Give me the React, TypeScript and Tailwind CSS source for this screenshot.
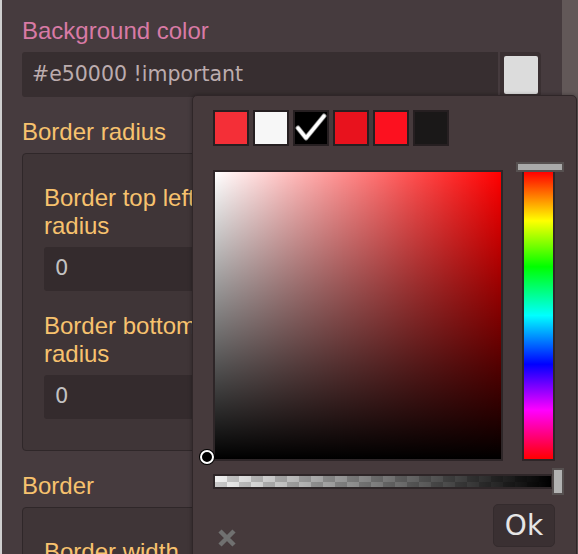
import React from "react";

const swatches = [
  { color: "bg-[#f42f37]", checked: false },
  { color: "bg-[#f7f7f7]", checked: false },
  { color: "bg-[#000000]", checked: true },
  { color: "bg-[#e8121d]", checked: false },
  { color: "bg-[#fc111f]", checked: false },
  { color: "bg-[#1a1818]", checked: false },
];

function FieldInput({ value }: { value: string }) {
  return (
    <div className="mt-[7px] flex h-[44px] items-center rounded-[3px] bg-[#342b2d] pl-[11px] font-['DejaVu_Sans',sans-serif] text-[21px] text-[#c2c2c2]">
      {value}
    </div>
  );
}

function Field({ label, value }: { label: string; value: string }) {
  return (
    <div>
      <div className="text-[24px] leading-[28px] text-[#f7c26e]">{label}</div>
      <FieldInput value={value} />
    </div>
  );
}

function Section({ label, color, children }: { label: string; color: string; children: React.ReactNode }) {
  return (
    <div>
      <div className={`text-[24px] leading-[28px] ${color}`}>{label}</div>
      <div className="mt-[7px]">{children}</div>
    </div>
  );
}

function Box({ children }: { children: React.ReactNode }) {
  return (
    <div className="rounded-[4px] border border-[#2f2729] bg-[#3f3537] px-[21px] pt-[30px] pb-[31px]">
      {children}
    </div>
  );
}

function ColorPicker() {
  return (
    <div className="absolute left-[192px] top-[95px] h-[480px] w-[385px] rounded-[5px] border border-[#2f2628] bg-[#463a3c] pl-[20px] pr-[21px] pt-[14px] shadow-[0_0_4px_rgba(0,0,0,0.35)]">
      <div className="flex gap-[4px]">
        {swatches.map((s, i) => (
          <div key={i} className={`h-[36px] w-[36px] border-2 border-[#261f21] ${s.color}`}>
            {s.checked && (
              <svg viewBox="0 0 32 32" className="h-full w-full">
                <path
                  d="M3 16 L11 26 L29 4"
                  fill="none"
                  stroke="#dddddd"
                  strokeWidth="5"
                  strokeLinecap="round"
                  strokeLinejoin="round"
                  opacity="0.6"
                />
                <path
                  d="M3 16 L11 26 L29 4"
                  fill="none"
                  stroke="white"
                  strokeWidth="3.5"
                  strokeLinecap="round"
                  strokeLinejoin="round"
                />
              </svg>
            )}
          </div>
        ))}
      </div>

      <div className="mt-[24px] flex gap-[19px]">
        <div className="relative h-[291px] w-[290px] border-2 border-[#2e2628] bg-[#ff0000]">
          <div className="absolute inset-0 bg-[linear-gradient(to_right,#ffffff,rgba(255,255,255,0))]" />
          <div className="absolute inset-0 bg-[linear-gradient(to_bottom,rgba(0,0,0,0),#000000)]" />
          <div className="absolute left-[-15px] top-[278px] h-[14px] w-[14px] rounded-full border-2 border-white bg-black shadow-[0_0_0_1px_#000]" />
        </div>
        <div className="relative h-[291px] w-[33px] border-2 border-[#2e2628] bg-[linear-gradient(to_bottom,#ff0000_0%,#ffff00_17%,#00ff00_33%,#00ffff_50%,#0000ff_67%,#ff00ff_83%,#ff0000_100%)]">
          <div className="absolute left-[-8px] top-[-10px] h-[10px] w-[48px] border-2 border-[#565050] bg-[#a9a9a9]" />
        </div>
      </div>

      <div className="relative mt-[13px] h-[15px] w-[340px] border-2 border-[#2e2628] bg-[repeating-conic-gradient(#c8c8c8_0%_25%,#f0f0f0_0%_50%)] bg-[length:24px_12px]">
        <div className="absolute inset-0 bg-[linear-gradient(to_right,rgba(0,0,0,0),#000000)]" />
        <div className="absolute left-[337px] top-[-8px] h-[27px] w-[12px] border-2 border-[#565050] bg-[#b2b2b2]" />
      </div>

      <div className="mt-[15px] flex items-start justify-between">
        <svg viewBox="0 0 18 18" className="ml-[5px] mt-[25px] h-[18px] w-[18px]">
          <path d="M2 2 L16 16 M16 2 L2 16" stroke="#707070" strokeWidth="4.5" strokeLinecap="butt" />
        </svg>
        <button className="flex h-[43px] w-[62px] items-center justify-center rounded-[5px] border border-[#342b2d] bg-[#3a3032] font-['DejaVu_Sans',sans-serif] text-[28px] text-[#e6e6e6]">
          Ok
        </button>
      </div>
    </div>
  );
}

export default function App() {
  return (
    <div className="relative flex h-[554px] w-[578px] overflow-hidden bg-[#463b3e] font-['Liberation_Sans',Arial,sans-serif]">
      <div className="w-[2px] bg-[#cfcfcf]" />
      <div className="flex flex-1 flex-col gap-[21px] pl-[20px] pr-[21px] pt-[17px]">
        <Section label="Background color" color="text-[#d87aa5]">
          <div className="flex h-[45px]">
            <div className="flex flex-1 items-center rounded-l-[3px] bg-[#372e30] pl-[10px] font-['DejaVu_Sans',sans-serif] text-[20.5px] text-[#bcacae]">
              #e50000 !important
            </div>
            <div className="ml-[2px] w-[41px] rounded-r-[4px] bg-[#3a3032] pl-[4px] pr-[3px] pt-[4px] pb-[3px]">
              <div className="h-full w-full rounded-[2px] bg-[#dcdcdc]" />
            </div>
          </div>
        </Section>

        <Section label="Border radius" color="text-[#f7c26e]">
          <Box>
            <div className="grid grid-cols-2 gap-x-[40px] gap-y-[21px]">
              <Field label="Border top left radius" value="0" />
              <Field label="Border top right radius" value="0" />
              <Field label="Border bottom left radius" value="0" />
              <Field label="Border bottom right radius" value="0" />
            </div>
          </Box>
        </Section>

        <Section label="Border" color="text-[#f7c26e]">
          <Box>
            <div className="grid grid-cols-2 gap-x-[40px] gap-y-[21px]">
              <Field label="Border width" value="0" />
              <Field label="Border style" value="none" />
            </div>
          </Box>
        </Section>
      </div>
      <div className="w-[16px] bg-[#625858]" />
      <ColorPicker />
    </div>
  );
}
